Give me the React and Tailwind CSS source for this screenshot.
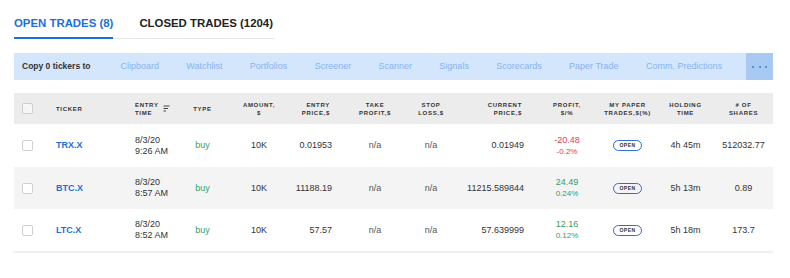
import React from 'react';

const links = ['Clipboard', 'Watchlist', 'Portfolios', 'Screener', 'Scanner', 'Signals', 'Scorecards', 'Paper Trade', 'Comm. Predictions'];

const rows = [
  { ticker: 'TRX.X', date: '8/3/20', time: '9:26 AM', price: '0.01953', current: '0.01949', profit: '-20.48', pct: '-0.2%', up: false, hold: '4h 45m', shares: '512032.77' },
  { ticker: 'BTC.X', date: '8/3/20', time: '8:57 AM', price: '11188.19', current: '11215.589844', profit: '24.49', pct: '0.24%', up: true, hold: '5h 13m', shares: '0.89' },
  { ticker: 'LTC.X', date: '8/3/20', time: '8:52 AM', price: '57.57', current: '57.639999', profit: '12.16', pct: '0.12%', up: true, hold: '5h 18m', shares: '173.7' },
];

const cols = 'grid grid-cols-[42px_79px_50px_35px_78px_36px_82px_30px_80px_82px_39px_77px_39px_1fr]';

const Checkbox = ({ head }) => (
  <div className={`w-[11px] h-[11px] rounded-[2px] border border-[#cfcfcf] ${head ? 'bg-[#f6f6f6]' : 'bg-white'}`} />
);

const SortIcon = () => (
  <svg width="7" height="7" viewBox="0 0 7 7" className="text-[#444]">
    <rect x="0.5" y="0.5" width="6" height="1" fill="currentColor" />
    <rect x="0.5" y="3" width="4.5" height="1" fill="currentColor" />
    <rect x="0.5" y="5.5" width="2.5" height="1" fill="currentColor" />
  </svg>
);

const Head = ({ children, align = 'center' }) => (
  <div className={`flex flex-col justify-center whitespace-nowrap ${align === 'right' ? 'items-end pr-[4px] text-right' : align === 'left' ? 'items-start' : 'items-center text-center'}`}>
    {children}
  </div>
);

const Cell = ({ children, align = 'center', className = '' }) => (
  <div className={`flex flex-col justify-center whitespace-nowrap ${align === 'right' ? 'items-end pr-[2px]' : align === 'left' ? 'items-start' : 'items-center'} ${className}`}>
    {children}
  </div>
);

export default function App() {
  return (
    <div className="w-[790px] h-[278px] bg-white font-['Liberation_Sans',Arial,sans-serif] text-[#333] pl-[14px] pt-[16px]">
      {/* Tabs */}
      <div className="flex items-end gap-[26px] w-[260px] border-b border-[#e6e6e6] whitespace-nowrap">
        <div className="shrink-0 text-[11.4px] leading-[14px] font-bold text-[#1c6fd9] pb-[7px] border-b-2 border-[#1c6fd9] -mb-px">
          OPEN TRADES (8)
        </div>
        <div className="shrink-0 text-[11.4px] leading-[14px] font-bold text-[#222] pb-[8px]">
          CLOSED TRADES (1204)
        </div>
      </div>

      {/* Copy toolbar */}
      <div className="mt-[14px] w-[759px] h-[27px] bg-[#d4e6fc] flex items-center">
        <div className="pl-[8px] text-[8.5px] font-bold text-[#333] whitespace-nowrap">Copy 0 tickers to</div>
        <div className="flex-1 flex justify-between ml-[30px] mr-[24px] text-[9px] text-[#88b3ec] whitespace-nowrap">
          {links.map((l) => (
            <span key={l}>{l}</span>
          ))}
        </div>
        <div className="w-[27px] h-full bg-[#a8c9f1] flex items-center justify-center gap-[4.5px]">
          <span className="w-[2px] h-[2px] rounded-full bg-[#3a7cdb]" />
          <span className="w-[2px] h-[2px] rounded-full bg-[#3a7cdb]" />
          <span className="w-[2px] h-[2px] rounded-full bg-[#3a7cdb]" />
        </div>
      </div>

      {/* Table */}
      <div className="mt-[13px] w-[759px]">
        <div className={`${cols} h-[31px] bg-[#ececec] text-[6px] leading-[8px] font-bold tracking-[0.7px] text-[#333]`}>
          <div className="flex items-center pl-[8px]"><Checkbox head /></div>
          <Head align="left">TICKER</Head>
          <div className="flex items-center gap-[4px]">
            <div>ENTRY<br />TIME</div>
            <SortIcon />
          </div>
          <Head>TYPE</Head>
          <Head>AMOUNT,<br />$</Head>
          <Head align="right">ENTRY<br />PRICE,$</Head>
          <Head>TAKE<br />PROFIT,$</Head>
          <Head>STOP<br />LOSS,$</Head>
          <Head align="right">CURRENT<br />PRICE,$</Head>
          <Head>PROFIT,<br />$/%</Head>
          <Head>MY PAPER<br />TRADES,$(%)</Head>
          <Head>HOLDING<br />TIME</Head>
          <Head># OF<br />SHARES</Head>
          <div />
        </div>

        {rows.map((r, i) => (
          <div key={r.ticker} className={`${cols} ${i === 0 ? 'h-[43px]' : 'h-[42px]'} ${i === 1 ? 'bg-[#f4f4f4]' : 'bg-white'} text-[9px] leading-[11px] text-[#333]`}>
            <div className="flex items-center pl-[8px]"><Checkbox /></div>
            <Cell align="left" className="font-bold text-[#1d6fd8]">{r.ticker}</Cell>
            <Cell align="left">
              <span>{r.date}</span>
              <span>{r.time}</span>
            </Cell>
            <Cell className="text-[#36a062]">buy</Cell>
            <Cell>10K</Cell>
            <Cell align="right">{r.price}</Cell>
            <Cell className="text-[#555]">n/a</Cell>
            <Cell className="text-[#555]">n/a</Cell>
            <Cell align="right">{r.current}</Cell>
            <Cell className={r.up ? 'text-[#2f9e68]' : 'text-[#e23a4f]'}>
              <span>{r.profit}</span>
              <span className="text-[8px]">{r.pct}</span>
            </Cell>
            <Cell>
              <span className="w-[29px] h-[11px] rounded-full border-[1.5px] border-[#2d6cdb] flex items-center justify-center text-[5px] leading-none font-bold tracking-[0.5px] text-[#333]">
                OPEN
              </span>
            </Cell>
            <Cell>{r.hold}</Cell>
            <Cell>{r.shares}</Cell>
            <div />
          </div>
        ))}
        <div className="h-[2px] bg-[#f0f0f0]" />
      </div>
    </div>
  );
}
